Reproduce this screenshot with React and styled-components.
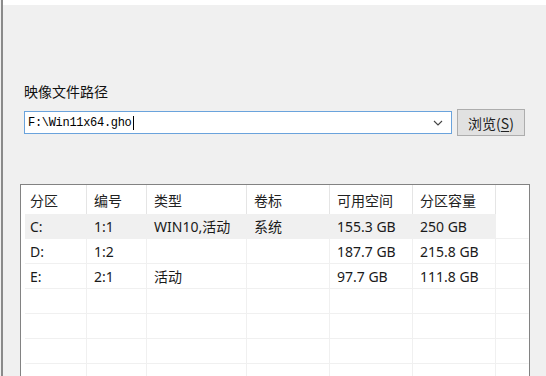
import React from 'react';
import styled, { createGlobalStyle } from 'styled-components';

const GlobalStyle = createGlobalStyle`
    body {
        margin: 0;
        background: #f0f0f0;
        overflow: hidden;
    }
`;

const Window = styled.div`
    position: relative;
    width: 546px;
    height: 376px;
    box-sizing: border-box;
    border-left: 2px solid #8a8a8a;
    margin-left: 1px;
    background: #f0f0f0;
    overflow: hidden;
    font-family: "Noto Sans", "Noto Sans CJK SC", sans-serif;
`;

const TopStrip = styled.div`
    height: 5px;
    background: #ffffff;
`;

const Body = styled.div`
    padding: 76px 0 0 21px;
`;

const Label = styled.div`
    font-family: "Noto Sans CJK SC", sans-serif;
    font-size: 14px;
    line-height: 20px;
    color: #111;
    margin-bottom: 8px;
`;

const PathRow = styled.div`
    display: flex;
    align-items: center;
    gap: 5px;
`;

const Combo = styled.div`
    width: 428px;
    height: 23px;
    box-sizing: border-box;
    border: 1px solid #6aa3dc;
    background: #fff;
    display: flex;
    align-items: center;
    padding: 0 8px 0 3px;
`;

const ComboText = styled.span`
    flex: 1;
    font-family: "Liberation Mono", "DejaVu Sans Mono", monospace;
    font-size: 12px;
    letter-spacing: -0.3px;
    color: #000;
    display: flex;
    align-items: center;
`;

const Caret = styled.span`
    display: inline-block;
    width: 1px;
    height: 14px;
    background: #000;
    margin-left: 1px;
`;

const Browse = styled.button`
    width: 68px;
    height: 27px;
    box-sizing: border-box;
    background: #e1e1e1;
    border: 1px solid #adadad;
    font-family: "Noto Sans CJK SC", sans-serif;
    font-size: 14px;
    color: #222;
    padding: 0;

    & u {
        text-underline-offset: 2px;
    }
`;

const List = styled.div`
    margin: 48px 0 0 -4px;
    width: 510px;
    height: 200px;
    box-sizing: border-box;
    border: 1px solid #828282;
    border-bottom: none;
    background: #fff;
    padding: 0 0 0 4px;
`;

const Grid = styled.div`
    display: grid;
    grid-template-columns: 62px 60px 100px 83px 83px 83px 33px;
`;

const HeadCell = styled.div`
    height: 29px;
    display: flex;
    align-items: center;
    padding-left: ${p => p.pad || 7}px;
    border-right: 1px solid ${p => p.last ? 'transparent' : '#e5e5e5'};
    font-family: "Noto Sans CJK SC", sans-serif;
    font-size: 14px;
    color: #222;
`;

const Cell = styled.div`
    height: 25px;
    box-sizing: border-box;
    display: flex;
    align-items: center;
    padding-left: ${p => p.pad || 7}px;
    border-right: 1px solid ${p => p.last ? 'transparent' : '#f0f0f0'};
    border-bottom: 1px solid #f0f0f0;
    background: ${p => p.selected ? '#f0f0f0' : '#fff'};
    font-size: 14px;
    color: #1a1a1a;
    white-space: nowrap;
`;

const Marks = styled.div`
    position: absolute;
    left: -3px;
    top: 183px;
    width: 3px;
    height: 6px;
    background: repeating-linear-gradient(#e05050 0 1px, transparent 1px 3px);
`;

const Chevron = () => (
    <svg width="10" height="6" viewBox="0 0 10 6">
        <path d="M1 1l4 4 4-4" fill="none" stroke="#444" strokeWidth="1.1" />
    </svg>
);

const headers = ['分区', '编号', '类型', '卷标', '可用空间', '分区容量', ''];

const rows = [
    ['C:', '1:1', 'WIN10,活动', '系统', '155.3 GB', '250 GB', ''],
    ['D:', '1:2', '', '', '187.7 GB', '215.8 GB', ''],
    ['E:', '2:1', '活动', '', '97.7 GB', '111.8 GB', ''],
    ['', '', '', '', '', '', ''],
    ['', '', '', '', '', '', ''],
    ['', '', '', '', '', '', ''],
    ['', '', '', '', '', '', ''],
];

export default function App() {
    return (
        <>
            <GlobalStyle />
            <Window>
                <Marks />
                <TopStrip />
                <Body>
                    <Label>映像文件路径</Label>
                    <PathRow>
                        <Combo>
                            <ComboText>F:\Win11x64.gho<Caret /></ComboText>
                            <Chevron />
                        </Combo>
                        <Browse>浏览(<u>S</u>)</Browse>
                    </PathRow>
                    <List>
                        <Grid>
                            {headers.map((h, i) => (
                                <HeadCell key={i} pad={i === 0 ? 5 : 7} last={i === headers.length - 1}>{h}</HeadCell>
                            ))}
                            {rows.map((r, ri) => r.map((c, ci) => (
                                <Cell
                                    key={ri + '-' + ci}
                                    pad={ci === 0 ? 5 : 7}
                                    last={ci === r.length - 1}
                                    selected={ri === 0 && ci < r.length - 1}
                                >
                                    {c}
                                </Cell>
                            )))}
                        </Grid>
                    </List>
                </Body>
            </Window>
        </>
    );
}
